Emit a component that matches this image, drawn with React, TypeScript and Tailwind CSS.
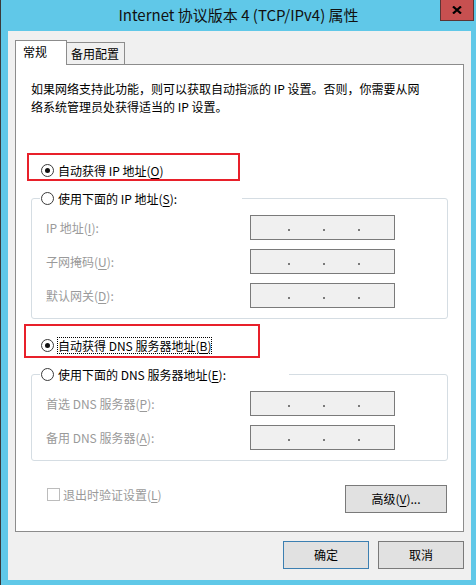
import React from 'react';

const Key = ({ k }: { k: string }) => (
  <span className="underline decoration-1 underline-offset-[2px]">{k}</span>
);

function Radio({ checked }: { checked?: boolean }) {
  return (
    <span className="flex h-[13px] w-[13px] shrink-0 items-center justify-center rounded-full border border-[#3a3a3a] bg-white">
      {checked && <span className="h-[5px] w-[5px] rounded-full bg-[#111]" />}
    </span>
  );
}

function RadioRow({ checked, focus, children }: { checked?: boolean; focus?: boolean; children: React.ReactNode }) {
  return (
    <div className="flex h-[18px] items-center gap-[3px] pl-px">
      <Radio checked={checked} />
      <span
        className={
          focus
            ? 'whitespace-nowrap border border-dotted border-black leading-[15px]'
            : 'whitespace-nowrap border border-transparent leading-[15px]'
        }
      >
        {children}
      </span>
    </div>
  );
}

function IpBox() {
  return (
    <div className="flex h-[25px] w-[145px] items-center gap-[33px] border border-[#7a7a7a] bg-[#f0f0f0] pl-[37px]">
      <span className="mt-[4px] h-[2px] w-[2px] bg-[#7a7a7a]" />
      <span className="mt-[4px] h-[2px] w-[2px] bg-[#7a7a7a]" />
      <span className="mt-[4px] h-[2px] w-[2px] bg-[#7a7a7a]" />
    </div>
  );
}

function Field({ children }: { children: React.ReactNode }) {
  return (
    <div className="flex items-center">
      <span className="w-[210px] whitespace-nowrap pl-[6px] text-[#9a9a9a]">{children}</span>
      <IpBox />
    </div>
  );
}

export default function App() {
  return (
    <div className="flex h-[585px] w-[476px] flex-col border-l border-[#3a3a3a] bg-[#60c8e8] font-['Noto_Sans_CJK_SC',sans-serif] text-[12px] text-black">
      {/* title bar */}
      <div className="relative flex h-[31px] shrink-0 items-center justify-center">
        <span className="text-[15px] text-[#111]">Internet 协议版本 4 (TCP/IPv4) 属性</span>
        <div className="absolute right-[2px] top-0 flex h-[21px] w-[34px] items-center justify-center border border-t-0 border-[#5b3535] bg-[#c75050]">
          <svg width="10" height="8" viewBox="0 0 10 8">
            <path d="M1 0.5 L9 7.5 M9 0.5 L1 7.5" stroke="#000" strokeWidth="2.2" />
          </svg>
        </div>
      </div>

      {/* client */}
      <div className="ml-[7px] flex h-[549px] w-[463px] flex-col bg-[#f0f0f0] px-[7px] pt-[9px]">
        {/* tabs */}
        <div className="flex h-[25px] items-end">
          <div className="h-[25px] w-[52px] border-l border-r border-t border-[#8c8c8c] bg-white pl-[7px] pt-[2px] leading-[18px]">
            常规
          </div>
          <div className="h-[23px] w-[58px] border-b border-r border-t border-[#8c8c8c] pl-[4px] pt-[2px] leading-[18px]">
            备用配置
          </div>
          <div className="h-px flex-1 bg-[#8c8c8c]" />
        </div>

        {/* panel */}
        <div className="flex w-[449px] flex-col border-b border-l border-r border-[#8c8c8c] bg-white">
          <p className="whitespace-nowrap pl-[15px] pt-[15px] leading-[18px]">
            如果网络支持此功能，则可以获取自动指派的 IP 设置。否则，你需要从网
            <br />
            络系统管理员处获得适当的 IP 设置。
          </p>

          <div className="ml-[11px] mt-[37px] h-[28px] w-[213px] border-2 border-[#e8202a] pl-[11px] pt-[6px]">
            <RadioRow checked>
              自动获得 IP 地址(<Key k="O" />)
            </RadioRow>
          </div>

          <fieldset className="ml-[15px] mt-[8px] w-[417px] rounded-[3px] border border-[#d5dde3] px-[8px] pb-[10px]">
            <legend className="h-[18px] w-[202px]">
              <RadioRow>
                使用下面的 IP 地址(<Key k="S" />):
              </RadioRow>
            </legend>
            <div className="flex flex-col gap-[9px] pt-[8px]">
              <Field>
                IP 地址(<Key k="I" />):
              </Field>
              <Field>
                子网掩码(<Key k="U" />):
              </Field>
              <Field>
                默认网关(<Key k="D" />):
              </Field>
            </div>
          </fieldset>

          <div className="ml-[8px] mt-[5px] h-[34px] w-[236px] border-2 border-[#e8202a] pl-[14px] pt-[10px]">
            <RadioRow checked focus>
              自动获得 DNS 服务器地址(<Key k="B" />)
            </RadioRow>
          </div>

          <fieldset className="ml-[15px] mt-[7px] w-[417px] rounded-[3px] border border-[#d5dde3] px-[8px] pb-[10px]">
            <legend className="h-[18px] w-[249px]">
              <RadioRow>
                使用下面的 DNS 服务器地址(<Key k="E" />):
              </RadioRow>
            </legend>
            <div className="flex flex-col gap-[9px] pt-[8px]">
              <Field>
                首选 DNS 服务器(<Key k="P" />):
              </Field>
              <Field>
                备用 DNS 服务器(<Key k="A" />):
              </Field>
            </div>
          </fieldset>

          <div className="mt-[24px] flex items-start justify-between pb-[18px] pl-[31px] pr-[16px]">
            <div className="flex h-[18px] items-center gap-[3px] text-[#9a9a9a]">
              <span className="h-[13px] w-[13px] border border-[#bcbcbc] bg-white" />
              <span className="leading-[15px]">
                退出时验证设置(<Key k="L" />)
              </span>
            </div>
            <button className="h-[28px] w-[102px] border border-[#7a7a7a] bg-[#e1e1e1] leading-[18px]">
              高级(<Key k="V" />)...
            </button>
          </div>
        </div>

        {/* dialog buttons */}
        <div className="mt-[9px] flex justify-end gap-[9px]">
          <button className="h-[28px] w-[86px] border border-[#3c7fb1] bg-[#e1e1e1]">确定</button>
          <button className="h-[28px] w-[86px] border border-[#7a7a7a] bg-[#e1e1e1]">取消</button>
        </div>
      </div>
    </div>
  );
}
